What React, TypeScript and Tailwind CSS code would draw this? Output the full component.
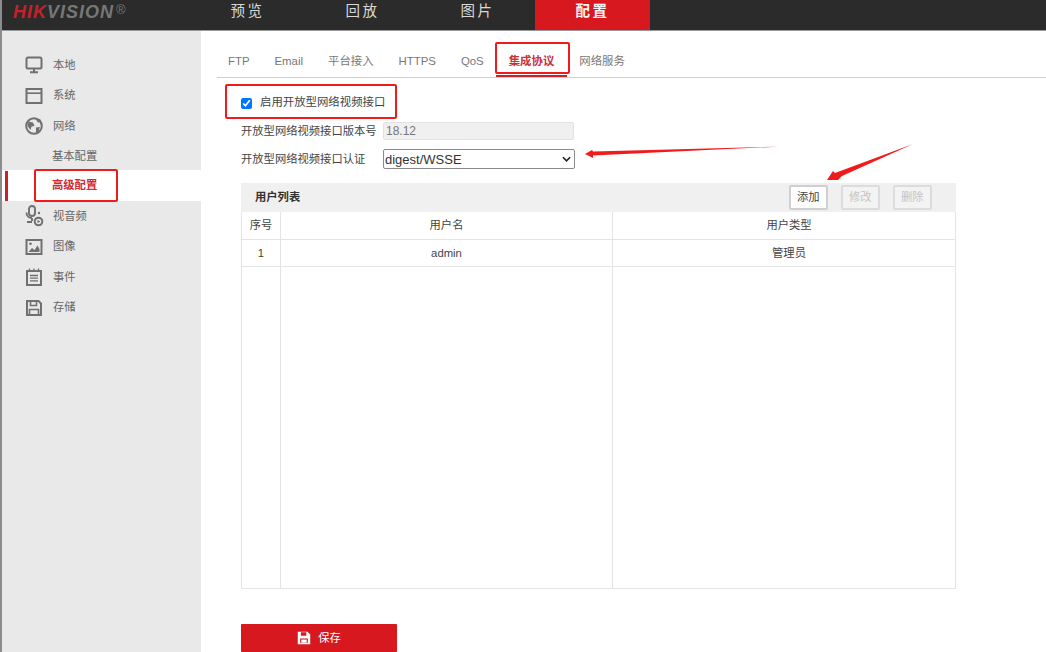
import type { ReactNode } from "react";

const FONT = "font-['Liberation_Sans','Noto_Sans_CJK_SC',sans-serif]";

function Icon({ children }: { children: ReactNode }) {
  return (
    <svg viewBox="0 0 18 18" className="h-[18px] w-[18px]" fill="none" stroke="#707070" strokeWidth="2">
      {children}
    </svg>
  );
}

const icons: Record<string, ReactNode> = {
  monitor: (
    <Icon>
      <rect x="1.500" y="1.500" width="15" height="11" rx="1.500" />
      <path d="M9 12.500V16M5 16.200h8" />
    </Icon>
  ),
  system: (
    <Icon>
      <rect x="1.500" y="2" width="15" height="14" />
      <path d="M1.500 6.200h15" strokeWidth="1.600" />
    </Icon>
  ),
  globe: (
    <Icon>
      <circle cx="9" cy="9" r="7.800" />
      <path d="M3.500 4.500l4.500 1 1.500 3.500-3 .5-1 3.500-3-4zM10.500 2l2.500 3.500 3.500-.5-1-2.500zM11 10.500l4-.5-1.500 5-2.500 .5z" fill="#707070" stroke="none" />
    </Icon>
  ),
  media: (
    <svg viewBox="0 0 20 22" className="h-[22px] w-[20px]" fill="none" stroke="#707070" strokeWidth="1.900">
      <rect x="5" y="1" width="6" height="10" rx="3" />
      <path d="M2.500 7.500c0 3.500 2.500 5.500 5.500 5.500M8 13v3M3 17h5" />
      <circle cx="14.500" cy="16.500" r="3.800" strokeWidth="2" />
      <path d="M13.500 14.800l2.800 1.700-2.800 1.700z" fill="#707070" stroke="none" />
      <circle cx="15" cy="8" r="1.200" fill="#707070" stroke="none" />
    </svg>
  ),
  image: (
    <Icon>
      <rect x="1.500" y="2" width="15" height="14" />
      <path d="M3.500 14l3.500-4 2.500 2 3-4.500 2 3.500v3z" fill="#707070" stroke="none" />
      <circle cx="5.500" cy="5.800" r="1.300" fill="#707070" stroke="none" />
    </Icon>
  ),
  event: (
    <Icon>
      <rect x="2" y="3" width="14" height="14" />
      <path d="M4.500 .5v3.500M9 .5v3.500M13.500 .5v3.500M5 7.500h8M5 10.200h8M5 12.900h8" strokeWidth="1.300" />
    </Icon>
  ),
  save: (
    <Icon>
      <path d="M2 2h11.500L16 4.500V16H2z" />
      <path d="M5.500 2v4.500h6V2M4.500 16v-5.500h9V16" strokeWidth="1.600" />
    </Icon>
  ),
};

const topNav = ["预览", "回放", "图片", "配置"];
const tabs = ["FTP", "Email", "平台接入", "HTTPS", "QoS", "集成协议", "网络服务"];

function SideItem({ icon, label }: { icon: string; label: string }) {
  return (
    <div className="flex h-[30.4px] items-center text-[#666]">
      <div className="ml-[20px] flex w-[24px] justify-center">{icons[icon]}</div>
      <span className="ml-[7px] text-[11.3px]">{label}</span>
    </div>
  );
}

function ToolButton({ label, disabled }: { label: string; disabled?: boolean }) {
  return (
    <button
      disabled={disabled}
      className={`h-[25px] w-[39.5px] rounded-[2px] border-2 text-[11.3px] ${
        disabled ? "border-[#dcdcdc] bg-[#f3f3f3] text-[#c4c4c4]" : "border-[#cfcfcf] bg-white text-[#444]"
      }`}
    >
      {label}
    </button>
  );
}

function Annotations() {
  return (
    <>
      <div className="absolute left-[34px] top-[169px] h-[33px] w-[84px] rounded-[2px] border-2 border-[#f01c1c]" />
      <div className="absolute left-[495px] top-[42px] h-[32px] w-[75px] rounded-[2px] border-2 border-[#f01c1c]" />
      <div className="absolute left-[225px] top-[84px] h-[35px] w-[172px] rounded-[2px] border-2 border-[#f01c1c]" />
      <svg className="absolute left-0 top-0 h-[652px] w-[1046px]" viewBox="0 0 1046 652" fill="#f01c1c">
        <polygon points="585,154 592,150 593,151.500 778,146.700 593,155.500 593,158" />
        <polygon points="827,180 833,171 835,173 913,144 842,176 838,180" />
      </svg>
    </>
  );
}

export default function App() {
  return (
    <div className={`relative flex h-[652px] w-[1046px] flex-col overflow-hidden border-l-2 border-[#8c8c8c] bg-white ${FONT}`}>
      <header className="flex h-[31px] shrink-0 border-b border-[#9a9a9a] bg-[#2b2b2b]">
        <div className="flex w-[188px] items-start pl-[11px] pt-[2px] text-[18px] font-bold italic leading-[20px]">
          <span className="tracking-[1px] text-[#c8202a]">HIK</span>
          <span className="tracking-[1px] text-[#777]">VISION</span>
          <span className="ml-[2px] text-[13px] font-normal not-italic leading-[16px] text-[#777]">®</span>
        </div>
        {topNav.map((item, i) => (
          <div
            key={item}
            className={`flex h-[30px] w-[115px] items-center justify-center pb-[7px] text-[14.500px] tracking-[2.500px] ${
              i === 3 ? "bg-[#d7181f] font-bold text-[#f4f4f4]" : "text-[#d8d8d8]"
            }`}
          >
            {item}
          </div>
        ))}
      </header>

      <div className="flex min-h-0 flex-1">
        <aside className="w-[199px] shrink-0 bg-[#e9e9e9] pt-[19px]">
          <SideItem icon="monitor" label="本地" />
          <SideItem icon="system" label="系统" />
          <SideItem icon="globe" label="网络" />
          <div className="flex h-[29px] items-center pl-[50px] pt-[2px] text-[11.3px] text-[#666]">基本配置</div>
          <div className="flex h-[31px] items-center bg-white pl-[50px] text-[11.3px] font-bold text-[#d02a32]">
            <div className="absolute left-[3px] h-[30px] w-[3px] bg-[#c8232c]" />
            高级配置
          </div>
          <SideItem icon="media" label="视音频" />
          <SideItem icon="image" label="图像" />
          <SideItem icon="event" label="事件" />
          <SideItem icon="save" label="存储" />
        </aside>

        <main className="min-w-0 flex-1 pl-[16px] text-[#444]">
          <nav className="flex h-[47px] items-end border-b border-[#d0d0d0] text-[11.4px] text-[#777]">
            <div className="-ml-[1.500px] flex">
              {tabs.map((tab, i) => (
                <div
                  key={tab}
                  className={`flex h-[30px] items-start justify-center px-[12.5px] pt-[6px] ${
                    i === 5 ? "border-b-2 border-[#c8232c] font-bold text-[#c8323a]" : ""
                  }`}
                >
                  {tab}
                </div>
              ))}
            </div>
          </nav>

          <div className="pl-[24px]">
            <label className="mt-[19px] flex h-[12px] items-center gap-[8px] text-[11.4px] text-[#444]">
              <input type="checkbox" defaultChecked className="m-0 h-[11px] w-[11px]" />
              启用开放型网络视频接口
            </label>

            <div className="mt-[13px] flex h-[18px] items-center text-[11.3px]">
              <span className="w-[142px]">开放型网络视频接口版本号</span>
              <input
                disabled
                defaultValue="18.12"
                className="h-[18px] w-[191px] rounded-[2px] border border-[#e2e2e2] bg-[#f0f0f0] px-[2px] text-[12px] text-[#777]"
              />
            </div>

            <div className="mt-[9px] flex h-[20px] items-center text-[11.3px]">
              <span className="w-[142px]">开放型网络视频接口认证</span>
              <div className="relative h-[20px] w-[192px]">
                <select className="h-[20px] w-full appearance-none rounded-[2px] border border-[#8a8a8a] bg-white pl-[1px] text-[13px] text-[#333]">
                  <option>digest/WSSE</option>
                </select>
                <svg viewBox="0 0 10 6" className="pointer-events-none absolute right-[4px] top-[7px] h-[6px] w-[9px]" fill="none" stroke="#222" strokeWidth="1.800">
                  <path d="M1 1l4 4 4-4" />
                </svg>
              </div>
            </div>

            <section className="mt-[14px] w-[715px]">
              <div className="flex h-[29px] items-center justify-between bg-[#f0f0f0] pl-[14px] pr-[24px]">
                <span className="text-[11.3px] font-bold text-[#333]">用户列表</span>
                <div className="flex gap-[12.500px]">
                  <ToolButton label="添加" />
                  <ToolButton label="修改" disabled />
                  <ToolButton label="删除" disabled />
                </div>
              </div>
              <div className="grid h-[377px] grid-cols-[39px_332px_1fr] grid-rows-[28px_27px_1fr] border border-t-0 border-[#e4e4e4] text-center text-[11.3px] text-[#444]">
                {["序号", "用户名", "用户类型", "1", "admin", "管理员", "", "", ""].map((cell, i) => (
                  <div
                    key={i}
                    className={`flex items-center justify-center border-[#e4e4e4] ${i % 3 < 2 ? "border-r" : "pl-[10px]"} ${
                      i < 6 ? "border-b" : ""
                    }`}
                  >
                    {cell}
                  </div>
                ))}
              </div>
            </section>

            <button className="mt-[35px] flex h-[28px] w-[156px] items-center justify-center gap-[7px] rounded-[1px] bg-[#d7181f] text-[11.3px] text-white">
              <svg viewBox="0 0 18 18" className="h-[14px] w-[14px]" fill="white">
                <path d="M1 1h12.500L17 4.500V17H1z" />
                <path d="M5 1.500h7v4.500H5zM4 9.500h10v5.500H4z" fill="#d7181f" />
                <path d="M5.500 11h7v4h-7z" />
              </svg>
              保存
            </button>
          </div>
        </main>
      </div>

      <div className="pointer-events-none absolute left-[-2px] top-0">
        <Annotations />
      </div>
    </div>
  );
}
